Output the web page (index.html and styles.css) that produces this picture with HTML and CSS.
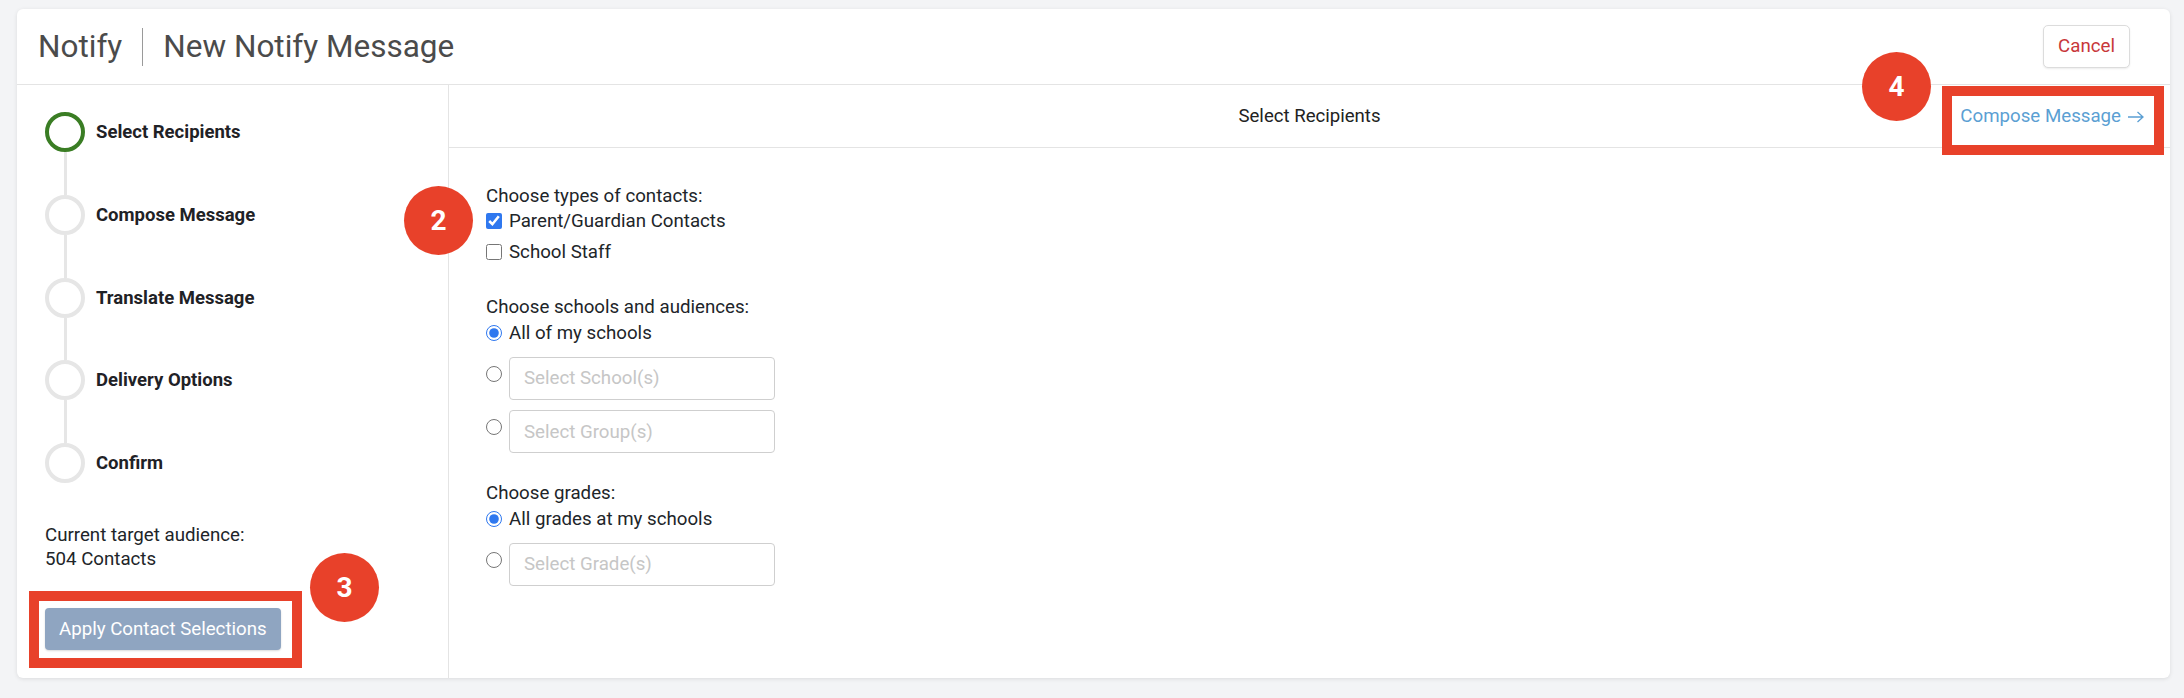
FILE: index.html
```html
<!DOCTYPE html>
<html lang="en">
<head>
    <meta charset="UTF-8">
    <meta name="viewport" content="width=device-width, initial-scale=1.0">
    <title>New Notify Message</title>
    <link rel="stylesheet" href="styles.css">
</head>
<body>
    <div class="card">
        <header class="page-header">
            <h1 class="title">
                <span>Notify</span>
                <span class="title-divider"></span>
                <span>New Notify Message</span>
            </h1>
            <button type="button" class="btn-cancel">Cancel</button>
        </header>

        <div class="card-body">
            <aside class="sidebar">
                <ol class="steps">
                    <li class="step active"><span class="step-dot"></span>Select Recipients</li>
                    <li class="step"><span class="step-dot"></span>Compose Message</li>
                    <li class="step"><span class="step-dot"></span>Translate Message</li>
                    <li class="step"><span class="step-dot"></span>Delivery Options</li>
                    <li class="step"><span class="step-dot"></span>Confirm</li>
                </ol>
                <p class="audience">Current target audience:<br>504 Contacts</p>
                <button type="button" class="btn-apply">Apply Contact Selections</button>
            </aside>

            <main class="main">
                <div class="main-header">
                    <h2 class="main-title">Select Recipients</h2>
                    <a href="#" class="next-link">Compose Message
                        <svg class="arrow" width="17" height="12" viewBox="0 0 17 12"><path d="M1 6h15M10.5 1l5.5 5-5.5 5" fill="none" stroke="currentColor" stroke-width="1.3"/></svg>
                    </a>
                </div>

                <form class="recipients">
                    <fieldset class="group">
                        <legend>Choose types of contacts:</legend>
                        <div class="options checks">
                            <label class="option"><input type="checkbox" checked> Parent/Guardian Contacts</label>
                            <label class="option"><input type="checkbox"> School Staff</label>
                        </div>
                    </fieldset>

                    <fieldset class="group">
                        <legend>Choose schools and audiences:</legend>
                        <div class="options radios">
                            <label class="option"><input type="radio" name="schools" checked> All of my schools</label>
                            <div class="option picker"><input type="radio" name="schools"><input type="text" class="select-box" placeholder="Select School(s)"></div>
                            <div class="option picker"><input type="radio" name="schools"><input type="text" class="select-box" placeholder="Select Group(s)"></div>
                        </div>
                    </fieldset>

                    <fieldset class="group">
                        <legend>Choose grades:</legend>
                        <div class="options radios">
                            <label class="option"><input type="radio" name="grades" checked> All grades at my schools</label>
                            <div class="option picker"><input type="radio" name="grades"><input type="text" class="select-box" placeholder="Select Grade(s)"></div>
                        </div>
                    </fieldset>
                </form>
            </main>
        </div>
    </div>

    <!-- tutorial callouts -->
    <div class="callout-box box-apply"></div>
    <div class="callout-box box-next"></div>
    <span class="badge badge-2">2</span>
    <span class="badge badge-3">3</span>
    <span class="badge badge-4">4</span>
</body>
</html>
```

FILE: styles.css
```css
/* Global */
* {
    box-sizing: border-box;
}

body {
    margin: 0;
    padding: 9px 14px 20px 17px;
    background: #f3f4f6;
    font-family: Roboto, "Liberation Sans", sans-serif;
    font-size: 18.7px;
    color: #212529;
    position: relative;
}

/* Card */
.card {
    background: #fff;
    border-radius: 6px;
    box-shadow: 0 1px 4px rgba(0, 0, 0, 0.1);
}

.page-header {
    height: 76px;
    display: flex;
    align-items: center;
    justify-content: space-between;
    padding: 0 40px 0 21px;
    border-bottom: 1px solid #e4e4e4;
}

.title {
    margin: 0;
    display: flex;
    align-items: center;
    gap: 20px;
    font-size: 31.5px;
    font-weight: 400;
    color: #4b4b4b;
}

.title-divider {
    width: 1px;
    height: 38px;
    background: #9a9a9a;
}

.btn-cancel {
    height: 43px;
    padding: 0 14px;
    margin-top: -1px;
    background: #fff;
    border: 1px solid #dcdcdc;
    border-radius: 5px;
    box-shadow: 0 1px 2px rgba(0, 0, 0, 0.08);
    font-family: inherit;
    font-size: 18.7px;
    color: #c8373a;
}

.card-body {
    display: flex;
}

/* Sidebar */
.sidebar {
    width: 432px;
    flex-shrink: 0;
    padding: 27px 0 28px 28px;
    border-right: 1px solid #e4e4e4;
}

.steps {
    list-style: none;
    margin: 0;
    padding: 0;
}

.step {
    position: relative;
    display: flex;
    align-items: center;
    height: 40px;
    margin-bottom: 42.75px;
    font-weight: 700;
    font-size: 18.5px;
    color: #1f2226;
}

.step:last-child {
    margin-bottom: 0;
}

.step:not(:last-child)::after {
    content: "";
    position: absolute;
    left: 18.5px;
    top: 40px;
    width: 3px;
    height: 42.75px;
    background: #e6e6e6;
}

.step-dot {
    width: 40px;
    height: 40px;
    margin-right: 11px;
    border: 4px solid #e6e6e6;
    border-radius: 50%;
}

.step.active .step-dot {
    border-color: #3a7d24;
}

.audience {
    margin: 40px 0 0;
    line-height: 24px;
}

.btn-apply {
    margin-top: 37px;
    height: 42px;
    padding: 0 14px;
    background: #8fa5c1;
    border: none;
    border-radius: 4px;
    box-shadow: 0 1px 2px rgba(0, 0, 0, 0.15);
    font-family: inherit;
    font-size: 18.7px;
    color: #fff;
}

/* Main pane */
.main {
    flex: 1;
}

.main-header {
    height: 63px;
    display: grid;
    grid-template-columns: 1fr auto 1fr;
    align-items: center;
    border-bottom: 1px solid #e4e4e4;
}

.main-title {
    grid-column: 2;
    margin: 0;
    font-size: 18.6px;
    font-weight: 400;
    color: #222;
}

.next-link {
    justify-self: end;
    display: flex;
    align-items: center;
    gap: 6px;
    padding-right: 26px;
    color: #5b9fd3;
    text-decoration: none;
}

.arrow {
    margin-top: 1px;
}

.recipients {
    padding: 36px 0 0 37px;
}

.group {
    border: none;
    margin: 0 0 28px;
    padding: 0;
}

.group:first-child {
    margin-bottom: 30px;
}

.group legend {
    padding: 0;
    line-height: 24px;
}

.options {
    display: flex;
    flex-direction: column;
}

.options.checks {
    gap: 5px;
}

.options.radios {
    gap: 10.5px;
    margin-top: 1px;
}

.option {
    display: flex;
    align-items: center;
    gap: 7px;
    min-height: 26px;
}

.option input[type="checkbox"],
.option input[type="radio"] {
    width: 16px;
    height: 16px;
    margin: 0;
    accent-color: #2f78ef;
}

.option.picker {
    align-items: flex-start;
}

.option.picker input[type="radio"] {
    margin-top: 9px;
}

.select-box {
    width: 266px;
    height: 43px;
    padding: 0 14px;
    border: 1px solid #cfcfcf;
    border-radius: 4px;
    font-family: inherit;
    font-size: 18.7px;
}

.select-box::placeholder {
    color: #c6c6c6;
}

/* Tutorial callouts */
.callout-box {
    position: absolute;
    border: 10px solid #e8412a;
}

.box-apply {
    left: 29px;
    top: 591px;
    width: 273px;
    height: 77px;
}

.box-next {
    left: 1942px;
    top: 86px;
    width: 222px;
    height: 69px;
}

.badge {
    position: absolute;
    width: 69px;
    height: 69px;
    border-radius: 50%;
    background: #e8412a;
    color: #fff;
    font-weight: 700;
    font-size: 28px;
    display: flex;
    align-items: center;
    justify-content: center;
}

.badge-2 {
    left: 404px;
    top: 186px;
}

.badge-3 {
    left: 310px;
    top: 553px;
}

.badge-4 {
    left: 1862px;
    top: 52px;
}
```
